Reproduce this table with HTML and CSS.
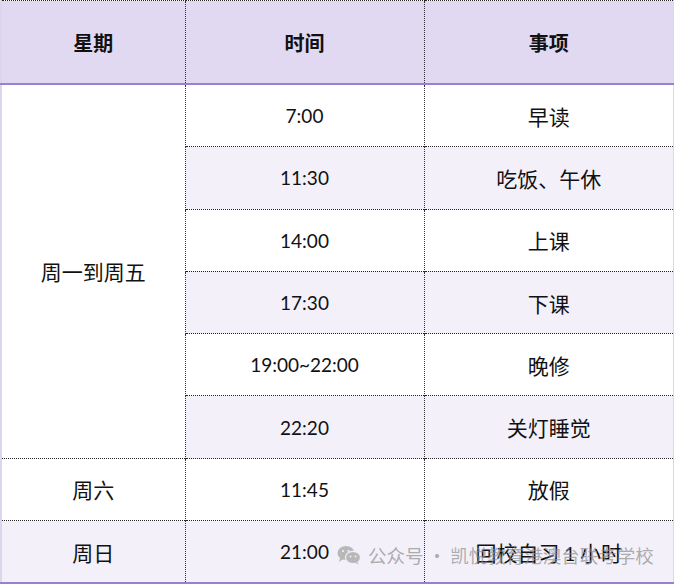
FILE: index.html
```html
<!DOCTYPE html>
<html lang="zh">
<head>
<meta charset="utf-8">
<link rel="stylesheet" href="styles.css">
</head>
<body>
<div class="wrap">
<table class="sched">
  <colgroup>
    <col class="c1"><col class="c2"><col class="c3">
  </colgroup>
  <thead>
    <tr><th>星期</th><th>时间</th><th>事项</th></tr>
  </thead>
  <tbody>
    <tr><td class="day" rowspan="6">周一到周五</td><td class="num">7:00</td><td>早读</td></tr>
    <tr class="alt"><td class="num">11:30</td><td>吃饭、午休</td></tr>
    <tr><td class="num">14:00</td><td>上课</td></tr>
    <tr class="alt"><td class="num">17:30</td><td>下课</td></tr>
    <tr><td class="num">19:00~22:00</td><td>晚修</td></tr>
    <tr class="alt"><td class="num">22:20</td><td>关灯睡觉</td></tr>
    <tr><td class="day">周六</td><td class="num">11:45</td><td>放假</td></tr>
    <tr class="alt last"><td class="day">周日</td><td class="num">21:00</td><td>回校自习 <span class="one">1</span> 小时</td></tr>
  </tbody>
</table>
<div class="wm">
  <svg class="wm-icon" viewBox="0 0 24 20" width="24" height="20">
    <ellipse cx="9" cy="8" rx="8.5" ry="7" fill="#b3b3b3"/>
    <path d="M3 13 L2 17 L6.5 14 Z" fill="#b3b3b3"/>
    <ellipse cx="16" cy="12.5" rx="7.5" ry="6.2" fill="#b3b3b3" stroke="#f3f0fa" stroke-width="1.2"/>
    <path d="M20 17 L22 19.5 L18.5 18 Z" fill="#b3b3b3"/>
    <circle cx="6" cy="6" r="1.1" fill="#f3f0fa"/>
    <circle cx="11.5" cy="6" r="1.1" fill="#f3f0fa"/>
    <circle cx="13.5" cy="11.5" r="0.9" fill="#f3f0fa"/>
    <circle cx="18.5" cy="11.5" r="0.9" fill="#f3f0fa"/>
  </svg>
  <span>公众号 · 凯悦教育港澳台联考学校</span>
</div>
</div>
</body>
</html>
```

FILE: styles.css
```css
html, body {
  margin: 0;
  padding: 0;
  background: #ffffff;
}
.wrap {
  position: relative;
  width: 674px;
  height: 586px;
  overflow: hidden;
}
.sched {
  border-collapse: collapse;
  width: 673px;
  table-layout: fixed;
  font-family: "Noto Sans CJK SC", sans-serif;
  color: #111;
  border-left: 2px solid #ddd5ee;
  border-right: 2px solid #ddd5ee;
}
.c1 { width: 184px; }
.c2 { width: 239px; }
.c3 { width: 250px; }
.sched th {
  background: #e1d9f1;
  height: 82px;
  padding: 0;
  font-size: 20px;
  font-weight: 700;
  border-top: 1px dotted #222;
  border-bottom: 2px solid #9b7fd2;
  text-align: center;
}
.sched th + th {
  border-left: 1px dotted #333;
}
.sched td {
  height: 61.3px;
  padding: 0;
  text-align: center;
  font-size: 21px;
  font-weight: 400;
  border-top: 1px dotted #222;
  border-left: 1px dotted #333;
  background: #ffffff;
}
.sched tbody tr:first-child td {
  border-top: none;
}
.sched td.day {
  border-left: none;
  background: #ffffff;
}
.sched tr.alt td {
  background: #f3f0fa;
}
.sched tr.last td {
  border-bottom: 2px solid #9b7fd2;
}
.sched td.num, .one {
  font-family: "Lato", "Open Sans", sans-serif;
  font-size: 19px;
}
.wm {
  position: absolute;
  left: 337px;
  top: 542px;
  display: flex;
  align-items: center;
  gap: 7px;
  color: rgba(140, 140, 140, 0.7);
  font-family: "Noto Sans CJK SC", sans-serif;
  font-size: 18.5px;
  white-space: nowrap;
}
.wm-icon {
  opacity: 0.9;
}
```
